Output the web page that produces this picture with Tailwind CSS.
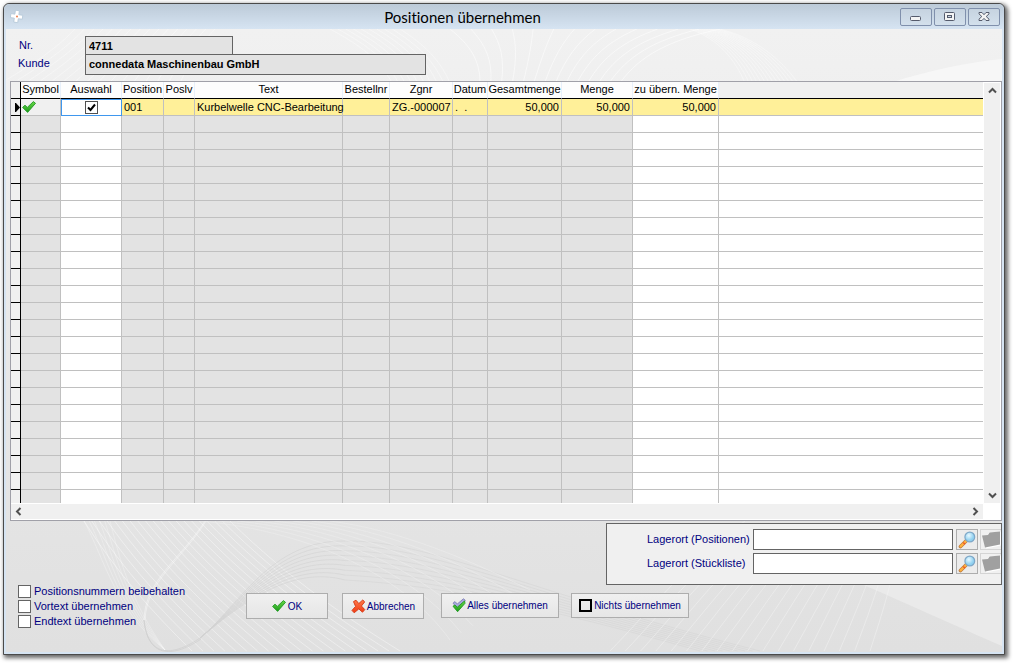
<!DOCTYPE html>
<html lang="de">
<head>
<meta charset="utf-8">
<title>Positionen übernehmen</title>
<script src="https://cdn.jsdelivr.net/npm/@tailwindcss/browser@4"></script>
</head>
<body class="bg-white">
<svg class="absolute size-0" aria-hidden="true">
  <defs>
    <linearGradient id="green" x1="0" y1="0" x2="0" y2="1"><stop offset="0" stop-color="#6bd848"/><stop offset="1" stop-color="#1a9a1a"/></linearGradient>
    <linearGradient id="red" x1="0" y1="0" x2="0" y2="1"><stop offset="0" stop-color="#ff7a4a"/><stop offset="1" stop-color="#f03a14"/></linearGradient>
    <radialGradient id="lens" cx=".4" cy=".35"><stop offset="0" stop-color="#e8f9ff"/><stop offset="1" stop-color="#8fd0f0"/></radialGradient>
    <symbol id="check" viewBox="0 0 14 12"><path d="M.6 6.400 3 4.200 5.300 6.400 11.400.6 13.500 2.300 5.600 11.400Z" fill="url(#green)" stroke="#1f9a22" stroke-width=".9" stroke-linejoin="round"/></symbol>
    <symbol id="cross" viewBox="0 0 15 15"><path d="M2.500 2.600 5 1.200 7.800 4.600 11.800.9 13.600 3 10.400 7 13.800 10.600 11.500 13.200 7.800 9.900 3.200 13.800 1 11.400 4.600 7.400Z" fill="url(#red)" stroke="#d8401c" stroke-width="1" stroke-linejoin="round"/></symbol>
    <symbol id="loupe" viewBox="0 0 18 18"><path d="m2.500 15.500 6-6" stroke="#b8763c" stroke-width="3.600" stroke-linecap="round"/><path d="m2.600 15.400 6-6" stroke="#ffb13c" stroke-width="2.200" stroke-linecap="round"/><path d="m5.200 11.400 1.800 1.800" stroke="#f0582c" stroke-width="1.400"/><circle cx="11.800" cy="6" r="4.900" fill="url(#lens)" stroke="#7fa8c8" stroke-width="1.200"/></symbol>
    <symbol id="folder" viewBox="0 0 20 18"><path d="m2 6 5-1.400 1-3 12-1v14l-15 3Z" fill="#fff"/><path d="m1 4.500 6-.5 1.600-2.500L19 .5v13L4 16.500Z" fill="#a0a0a0"/></symbol>
  </defs>
</svg>

<div class="flex h-screen min-h-[560px] pt-[3px] pr-2 pb-2 pl-[3px] font-['Liberation_Sans',Arial,sans-serif] text-[11px] leading-[13px] text-black">
<main class="flex min-w-0 flex-1 flex-col rounded-t-md border border-[#4a4a4a] bg-[#d6e4f2] px-[2px] pb-[2px] shadow-[2px_2px_4px_1px_rgba(0,0,0,0.6)]">

  <header class="-mx-[2px] grid h-[25px] shrink-0 grid-cols-[16px_1fr_auto] items-center rounded-t-md bg-linear-to-b from-[#bccad8] to-[#d6e4f2] pr-1 pl-[5px]">
    <svg class="size-4" viewBox="0 0 16 16" aria-hidden="true"><path d="M5.500 1.500h4v4h4v4h-4v4h-4v-4h-4v-4h4Z" fill="#fff" stroke="#b4c8d8" stroke-width=".8" transform="rotate(8 8 8)"/><circle cx="8" cy="7.500" r=".9" fill="#e8703a"/></svg>
    <h1 class="text-center font-['Lato',sans-serif] text-[15px] leading-5 [font-variant-ligatures:none]">Positionen übernehmen</h1>
    <div class="flex justify-end gap-[2px]">
      <button aria-label="Minimieren" class="flex h-[18px] w-8 items-center justify-center rounded-[2px] border border-[#8090ac] bg-linear-to-b from-[#c6d3e0] to-[#d3e0ec]"><svg class="h-3 w-3" viewBox="0 0 12 12"><rect x=".5" y="5.500" width="10" height="4" rx="1" fill="#f4f4f4" stroke="#555b6c"/></svg></button>
      <button aria-label="Maximieren" class="flex h-[18px] w-8 items-center justify-center rounded-[2px] border border-[#8090ac] bg-linear-to-b from-[#c6d3e0] to-[#d3e0ec]"><svg class="h-3 w-3" viewBox="0 0 12 12"><rect x=".5" y="1.500" width="10" height="8" rx="1" fill="#f4f4f4" stroke="#555b6c"/><rect x="3.500" y="4.500" width="4" height="2" fill="#cdd9e6" stroke="#555b6c"/></svg></button>
      <button aria-label="Schließen" class="flex h-[18px] w-8 items-center justify-center rounded-[2px] border border-[#8090ac] bg-linear-to-b from-[#c6d3e0] to-[#d3e0ec]"><svg class="h-3 w-3" viewBox="0 0 12 12"><path d="M1 1.500h3L6 3.700 8 1.500h3v1.400L8.200 5.500 11 8.200v1.300H8L6 7.400 4 9.500H1V8.200l2.800-2.700L1 2.900Z" fill="#f4f4f4" stroke="#555b6c"/></svg></button>
    </div>
  </header>

  <div class="relative isolate flex min-h-0 flex-1 flex-col overflow-hidden bg-linear-to-b from-[#f1f1f1] to-[#e0e0e0]">
    <svg id="waves" class="absolute inset-0 -z-10 size-full" viewBox="6 29 996 623" preserveAspectRatio="none" fill="none" aria-hidden="true">
      <path d="M890 83C930 70 970 62 1002 59V83Z" fill="#f7f7f7"/>
      <path d="M840 575C900 600 960 628 1002 646V585H840Z" fill="#eaeaea"/>
    </svg>

    <div class="grid grid-cols-[67px_1fr] pt-[7px] pl-3 text-[#000080]">
      <label for="nr" class="pt-[3px] pl-px">Nr.</label>
      <input id="nr" value="4711" readonly class="h-[19px] w-[148px] border border-[#646464] bg-[#e3e3e3] px-[3px] font-bold text-black">
      <label for="kunde" class="pt-[2px]">Kunde</label>
      <input id="kunde" value="connedata Maschinenbau GmbH" readonly class="-mt-px h-[21px] w-[341px] border border-[#646464] bg-[#e3e3e3] px-[3px] pb-px font-bold text-black">
    </div>

    <section class="mt-[6px] ml-1 grid min-h-0 flex-1 grid-cols-[1fr_17px] grid-rows-[1fr_15px] gap-px border border-[#a0a0a8] bg-white pb-px" aria-label="Positionen">
      <div class="min-h-0 overflow-hidden bg-white">
        <table class="w-full table-fixed border-separate border-spacing-0 whitespace-nowrap">
          <colgroup><col class="w-[10px]"><col class="w-[40px]"><col class="w-[61px]"><col class="w-[42px]"><col class="w-[31px]"><col class="w-[148px]"><col class="w-[47px]"><col class="w-[63px]"><col class="w-[35px]"><col class="w-[74px]"><col class="w-[71px]"><col class="w-[86px]"><col></colgroup>
          <thead>
            <tr class="h-[17px] *:border-b *:border-b-black *:p-0 *:pb-px *:font-normal">
              <td class="border-r border-r-black bg-[#f0f0f0]"></td>
              <th class="border-r border-r-[#e8f0fa] bg-[#fdfdfd]">Symbol</th>
              <th class="border-r border-r-[#e8f0fa] bg-[#fdfdfd]">Auswahl</th>
              <th class="border-r border-r-[#e8f0fa] bg-[#fdfdfd]">Position</th>
              <th class="border-r border-r-[#e8f0fa] bg-[#fdfdfd]">Poslv</th>
              <th class="border-r border-r-[#e8f0fa] bg-[#fdfdfd]">Text</th>
              <th class="border-r border-r-[#e8f0fa] bg-[#fdfdfd]">Bestellnr</th>
              <th class="border-r border-r-[#e8f0fa] bg-[#fdfdfd]">Zgnr</th>
              <th class="border-r border-r-[#e8f0fa] bg-[#fdfdfd]">Datum</th>
              <th class="border-r border-r-[#e8f0fa] bg-[#fdfdfd]">Gesamtmenge</th>
              <th class="border-r border-r-[#e8f0fa] bg-[#fdfdfd]">Menge</th>
              <th class="border-r border-r-[#e8f0fa] bg-[#fdfdfd]">zu übern. Menge</th>
              <td class="bg-[#f0f0f0]"></td>
            </tr>
          </thead>
          <tbody id="rows">
            <tr class="h-[17px] *:border-r *:border-b *:border-[#c0c0c0] *:bg-[#fff099] *:px-[2px] *:py-0">
              <td class="border-black! bg-[#f0f0f0]! px-0!"><svg class="ml-1 h-[9px] w-[5px]" viewBox="0 0 5 9"><path d="M0 0h1l4 4.500L1 9H0Z"/></svg></td>
              <td class="bg-[#f0f0f0]! px-px!"><svg class="h-3 w-[14px]"><use href="#check"/></svg></td>
              <td class="border! border-[#3f97ee]! bg-white! p-0!">
                <div class="mx-auto grid size-[13px] *:[grid-area:1/1]">
                  <input type="checkbox" checked aria-label="Auswahl Position 001" class="size-[13px] appearance-none border border-[#505050] bg-white">
                  <svg class="pointer-events-none size-[13px]" viewBox="0 0 13 13" aria-hidden="true"><path d="M3 6.500 5.500 9 10 3.500" fill="none" stroke="#000" stroke-width="2"/></svg>
                </div>
              </td>
              <td>001</td><td></td><td>Kurbelwelle CNC-Bearbeitung</td><td></td><td>ZG.-000007</td><td class="whitespace-pre">.  .</td>
              <td class="text-right">50,000</td><td class="text-right">50,000</td><td class="text-right">50,000</td>
              <td class="border-r-0!"></td>
            </tr>
          </tbody>
        </table>
        <template id="empty">
          <tr class="h-[17px] *:border-r *:border-b *:border-[#c0c0c0] *:bg-[#e3e3e3] *:p-0">
            <td class="border-black! bg-[#f0f0f0]!"></td><td></td><td class="bg-white!"></td><td></td><td></td><td></td><td></td><td></td><td></td><td></td><td></td><td class="bg-white!"></td><td class="border-r-0! bg-white!"></td>
          </tr>
        </template>
      </div>
      <div class="mt-px mr-px flex flex-col items-center justify-between bg-[#f0f0f0] py-1">
        <button aria-label="Nach oben"><svg class="h-[7px] w-[9px]" viewBox="0 0 9 7"><path d="M1 5.500 4.500 2 8 5.500" fill="none" stroke="#505050" stroke-width="2"/></svg></button>
        <button aria-label="Nach unten"><svg class="h-[7px] w-[9px]" viewBox="0 0 9 7"><path d="M1 1.500 4.500 5 8 1.500" fill="none" stroke="#505050" stroke-width="2"/></svg></button>
      </div>
      <div class="flex items-center justify-between bg-[#f0f0f0] px-1">
        <button aria-label="Nach links"><svg class="h-[9px] w-[7px]" viewBox="0 0 7 9"><path d="M5.500 1 2 4.500 5.500 8" fill="none" stroke="#505050" stroke-width="2"/></svg></button>
        <button aria-label="Nach rechts"><svg class="h-[9px] w-[7px]" viewBox="0 0 7 9"><path d="M1.500 1 5 4.500 1.500 8" fill="none" stroke="#505050" stroke-width="2"/></svg></button>
      </div>
    </section>

    <section class="mt-[2px] ml-auto flex h-[62px] w-[396px] shrink-0 flex-col gap-[3px] overflow-hidden border border-[#646464] bg-[#f0f0f0] pt-[5px] pl-10 text-[#000080]">
      <div class="flex h-[21px] items-center">
        <label for="lp" class="w-[106px] shrink-0">Lagerort (Positionen)</label>
        <input id="lp" class="h-[21px] w-[200px] shrink-0 border border-[#646464] bg-white px-1">
        <button aria-label="Lagerort (Positionen) suchen" class="ml-[3px] flex h-[21px] w-[22px] shrink-0 items-center justify-center border border-[#adadad] bg-[#ececec]"><svg class="size-[18px]"><use href="#loupe"/></svg></button>
        <button disabled aria-label="Lagerort (Positionen) öffnen" class="ml-[2px] flex h-[21px] w-[22px] shrink-0 items-center justify-center border border-[#d4d4d4]"><svg class="h-[18px] w-5 shrink-0"><use href="#folder"/></svg></button>
      </div>
      <div class="flex h-[21px] items-center">
        <label for="ls" class="w-[106px] shrink-0">Lagerort (Stückliste)</label>
        <input id="ls" class="h-[21px] w-[200px] shrink-0 border border-[#646464] bg-white px-1">
        <button aria-label="Lagerort (Stückliste) suchen" class="ml-[3px] flex h-[21px] w-[22px] shrink-0 items-center justify-center border border-[#adadad] bg-[#ececec]"><svg class="size-[18px]"><use href="#loupe"/></svg></button>
        <button disabled aria-label="Lagerort (Stückliste) öffnen" class="ml-[2px] flex h-[21px] w-[22px] shrink-0 items-center justify-center border border-[#d4d4d4]"><svg class="h-[18px] w-5 shrink-0"><use href="#folder"/></svg></button>
      </div>
    </section>

    <div class="flex shrink-0 items-start pb-6 pl-3 text-[#000080]">
      <div class="flex w-[228px] shrink-0 flex-col gap-[2px]">
        <label class="flex items-center gap-[3px]"><input type="checkbox" class="size-[13px] appearance-none border border-[#646464] bg-white">Positionsnummern beibehalten</label>
        <label class="flex items-center gap-[3px]"><input type="checkbox" class="size-[13px] appearance-none border border-[#646464] bg-white">Vortext übernehmen</label>
        <label class="flex items-center gap-[3px]"><input type="checkbox" class="size-[13px] appearance-none border border-[#646464] bg-white">Endtext übernehmen</label>
      </div>
      <div class="flex items-start pt-2 text-[10px]">
        <button class="flex h-[26px] w-[82px] items-center justify-center gap-[2px] border border-[#adadad] bg-linear-to-b from-[#f0f0f0] to-[#e6e6e6]"><svg class="h-3 w-[14px]"><use href="#check"/></svg>OK</button>
        <button class="ml-[14px] flex h-[26px] w-[82px] items-center justify-center gap-px border border-[#adadad] bg-linear-to-b from-[#f0f0f0] to-[#e6e6e6]"><svg class="size-[15px]"><use href="#cross"/></svg>Abbrechen</button>
        <button class="ml-[17px] flex h-[25px] w-[118px] items-center justify-center gap-px border border-[#adadad] bg-linear-to-b from-[#f0f0f0] to-[#e6e6e6]"><svg class="h-[15px] w-[14px]" viewBox="0 0 14 15"><path d="M1 5.200 3 3.600 5.300 6 11.400.8 13.300 2.300 5.600 10.200Z" fill="#a9a9e0" stroke="#8080b4" stroke-width=".9"/><path d="M1 8.200 3 7 5.300 9.200 12.600 3 13 5.300 5.600 13.700Z" fill="url(#green)" stroke="#1f9a22" stroke-width=".9"/></svg>Alles übernehmen</button>
        <button class="ml-3 flex h-[25px] w-[118px] items-center justify-center gap-[2px] border border-[#adadad] bg-linear-to-b from-[#f0f0f0] to-[#e6e6e6]"><span class="size-[13px] border-2 border-black"></span>Nichts übernehmen</button>
      </div>
    </div>
  </div>
</main>
</div>

<script>
  const rows = document.getElementById('rows');
  const empty = document.getElementById('empty');
  for (let i = 0; i < 24; i++) rows.append(empty.content.cloneNode(true));

  // Background line art: each family blends from one cubic curve to another.
  const waves = document.getElementById('waves');
  function family(from, to, count, color, opacity) {
    for (let i = 0; i < count; i++) {
      const t = i / (count - 1);
      const p = from.map((v, k) => (v + (to[k] - v) * t).toFixed(1));
      const path = document.createElementNS('http://www.w3.org/2000/svg', 'path');
      path.setAttribute('d', `M${p[0]} ${p[1]}C${p.slice(2).join(' ')}`);
      path.setAttribute('stroke', color);
      path.setAttribute('stroke-opacity', opacity);
      waves.append(path);
    }
  }
  family([6, 80, 40, 60, 60, 45, 75, 29], [180, 83, 190, 60, 200, 45, 215, 29], 16, '#ffffff', 0.35);
  family([330, 29, 360, 45, 380, 60, 392, 83], [400, 29, 425, 45, 440, 60, 450, 83], 10, '#ffffff', 0.35);
  family([480, 83, 480, 60, 470, 45, 450, 29], [620, 83, 640, 55, 670, 40, 720, 29], 14, '#ffffff', 0.5);
  family([690, 29, 720, 40, 735, 60, 745, 83], [720, 29, 755, 38, 780, 58, 798, 83], 14, '#ffffff', 0.35);
  family([84, 521, 115, 570, 150, 610, 192, 651], [230, 521, 290, 580, 350, 620, 400, 651], 20, '#ffffff', 0.4);
  family([84, 521, 105, 560, 115, 610, 165, 650], [110, 521, 120, 560, 130, 600, 165, 650], 6, '#ffffff', 0.25);
  family([205, 521, 180, 560, 145, 580, 144, 620], [206, 521, 181, 561, 146, 581, 145, 621], 2, '#ffffff', 0.4);
  family([144, 620, 148, 660, 175, 655, 200, 638], [144, 620, 148, 661, 176, 656, 201, 639], 2, '#cfcfcf', 0.7);
  family([200, 638, 240, 605, 270, 540, 345, 541], [200, 638, 240, 605, 290, 565, 345, 580], 9, '#d2d2d2', 0.6);
  family([345, 541, 430, 540, 520, 590, 760, 651], [345, 580, 430, 585, 520, 600, 700, 651], 9, '#d6d6d6', 0.6);
  family([330, 521, 400, 530, 470, 560, 530, 590], [200, 521, 300, 530, 400, 570, 450, 640], 8, '#ececec', 0.6);
  family([610, 651, 650, 610, 690, 560, 745, 521], [870, 651, 880, 620, 890, 590, 895, 560], 18, '#f4f4f4', 0.5);
</script>
</body>
</html>
